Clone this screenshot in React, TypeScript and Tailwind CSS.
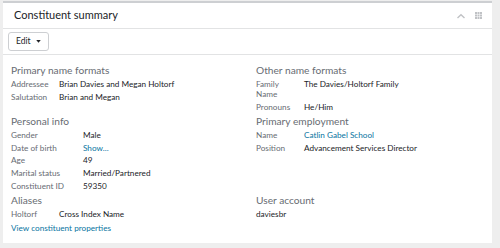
import React from "react";

type Row = { label: React.ReactNode; value: React.ReactNode; link?: boolean };

function Section({ title, rows, labelWidth }: { title: string; rows: Row[]; labelWidth: string }) {
  return (
    <div>
      <h3 className="text-[10.2px] leading-[14px] text-[#686c73]">{title}</h3>
      <div className="mt-[0.5px]">
        {rows.map((r, i) => (
          <div key={i} className="flex text-[8.2px] leading-[10px] py-[1.375px]">
            <div className={`${labelWidth} shrink-0 text-[#686c73] whitespace-nowrap`}>{r.label}</div>
            <div className={r.link ? "text-[#0974a1]" : "text-[#212327]"}>{r.value}</div>
          </div>
        ))}
      </div>
    </div>
  );
}

export default function App() {
  return (
    <div
      className="w-[500px] h-[248px] bg-[#eeeeee] pt-[1px] pl-[3px] overflow-hidden"
      style={{ fontFamily: "Lato, 'Open Sans', sans-serif" }}
    >
      <div className="w-[489px] h-[242px] bg-white border-t-2 border-[#cdcfd2]">
        {/* header */}
        <div className="h-[26px] flex items-center justify-between pl-[11px] pr-[10px] border-b border-[#e2e3e4]">
          <h2 className="text-[11px] text-[#212327]">Constituent summary</h2>
          <div className="flex items-center gap-[10px] text-[#c0c2c5]">
            <svg width="8" height="6" viewBox="0 0 8 6" fill="none">
              <path d="M0.5 5 L4 1.8 L7.5 5" stroke="currentColor" strokeWidth="1.4" />
            </svg>
            <svg width="7" height="7" viewBox="0 0 7 7" fill="currentColor">
              <rect x="0" y="0" width="2" height="2" />
              <rect x="2.5" y="0" width="2" height="2" />
              <rect x="5" y="0" width="2" height="2" />
              <rect x="0" y="2.5" width="2" height="2" />
              <rect x="2.5" y="2.5" width="2" height="2" />
              <rect x="5" y="2.5" width="2" height="2" />
              <rect x="0" y="5" width="2" height="2" />
              <rect x="2.5" y="5" width="2" height="2" />
              <rect x="5" y="5" width="2" height="2" />
            </svg>
          </div>
        </div>

        {/* toolbar */}
        <div className="px-[5px] py-[3px] border-b border-[#e2e3e4]">
          <button className="h-[19px] flex items-center gap-[5px] px-[7px] border border-[#cdcfd2] rounded-[3px] bg-white text-[8.5px] text-[#212327]">
            Edit
            <svg width="5" height="3" viewBox="0 0 6 4" fill="currentColor">
              <path d="M0 0 H6 L3 3.5 Z" />
            </svg>
          </button>
        </div>

        {/* content */}
        <div className="grid grid-cols-[245px_1fr] gap-y-[1px] pl-[8px] pt-[8px]">
          <Section
            title="Primary name formats"
            labelWidth="w-[48px]"
            rows={[
              { label: "Addressee", value: "Brian Davies and Megan Holtorf" },
              { label: "Salutation", value: "Brian and Megan" },
            ]}
          />
          <Section
            title="Other name formats"
            labelWidth="w-[48px]"
            rows={[
              { label: <>Family<br />Name</>, value: "The Davies/Holtorf Family" },
              { label: "Pronouns", value: "He/Him" },
            ]}
          />
          <Section
            title="Personal info"
            labelWidth="w-[72px]"
            rows={[
              { label: "Gender", value: "Male" },
              { label: "Date of birth", value: "Show...", link: true },
              { label: "Age", value: "49" },
              { label: "Marital status", value: "Married/Partnered" },
              { label: "Constituent ID", value: "59350" },
            ]}
          />
          <Section
            title="Primary employment"
            labelWidth="w-[48px]"
            rows={[
              { label: "Name", value: "Catlin Gabel School", link: true },
              { label: "Position", value: "Advancement Services Director" },
            ]}
          />
          <div>
            <Section
              title="Aliases"
              labelWidth="w-[48px]"
              rows={[{ label: "Holtorf", value: "Cross Index Name" }]}
            />
            <a className="block mt-[2px] text-[8.2px] leading-[10px] text-[#0974a1]">
              View constituent properties
            </a>
          </div>
          <div>
            <h3 className="text-[10.2px] leading-[14px] text-[#686c73]">User account</h3>
            <div className="mt-[0.5px] text-[8.2px] leading-[10px] py-[1.375px] text-[#212327]">daviesbr</div>
          </div>
        </div>
      </div>
    </div>
  );
}
